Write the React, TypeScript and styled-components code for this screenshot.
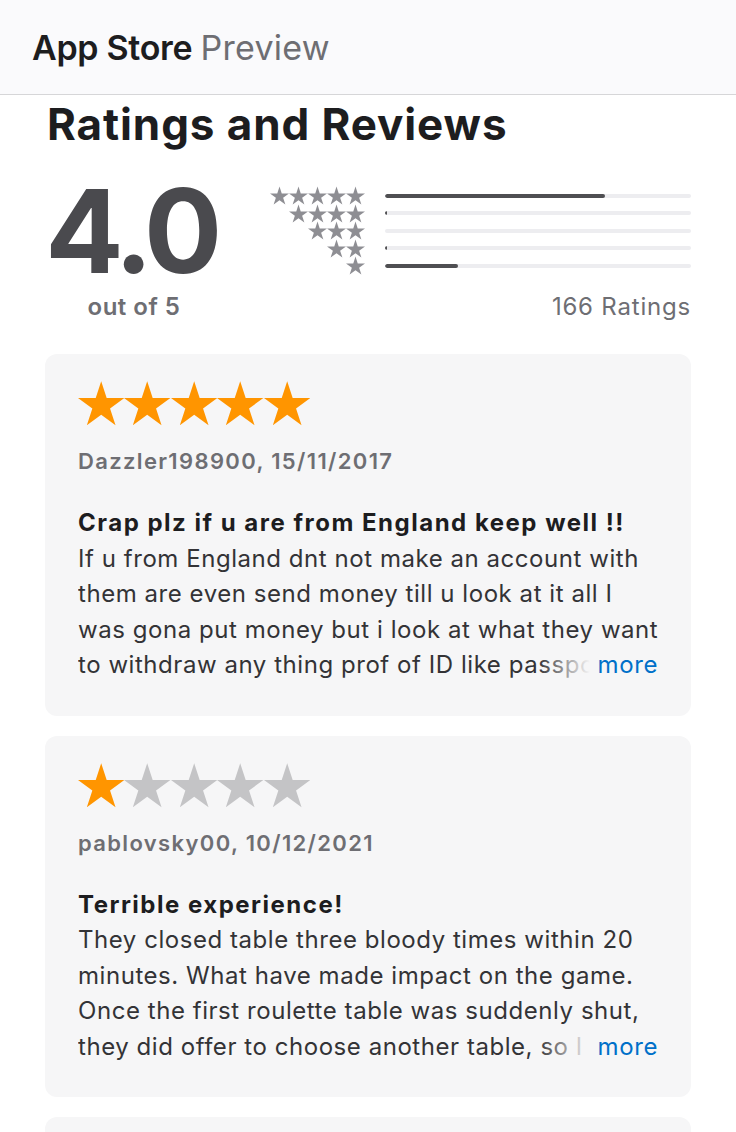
import styled, { createGlobalStyle } from "styled-components";

const GlobalStyle = createGlobalStyle`
  body {
    margin: 0;
    background: #fff;
    font-family: Inter, "Liberation Sans", sans-serif;
    color: #1d1d1f;
  }
`;

const Header = styled.header`
  height: 94px;
  background: #fafafc;
  border-bottom: 1px solid #d6d6d8;
  display: flex;
  align-items: center;
  padding: 0 32px;
  font-size: 34px;
`;

const Brand = styled.span`
  font-weight: 600;
  letter-spacing: -0.3px;
  color: #1d1d1f;
`;

const Sub = styled.span`
  font-weight: 400;
  letter-spacing: 0.3px;
  color: #6e6e73;
  margin-left: 8px;
`;

const Main = styled.main`
  padding: 0 45px;
`;

const Title = styled.h2`
  margin: 3px 0 0;
  padding-left: 2px;
  font-size: 44px;
  font-weight: 700;
  letter-spacing: 0.9px;
  line-height: 52px;
`;

const Summary = styled.section`
  display: flex;
  align-items: flex-start;
  margin-top: 31px;
`;

const Score = styled.div`
  display: flex;
  flex-direction: column;
  align-items: center;
  width: 178px;
`;

const Big = styled.div`
  font-size: 116px;
  font-weight: 700;
  line-height: 100px;
  letter-spacing: -5.5px;
  margin-right: 6px;
  color: #4a4a4e;
`;

const OutOf = styled.div`
  font-size: 24px;
  line-height: 30px;
  font-weight: 600;
  letter-spacing: 0.5px;
  color: #6e6e73;
  margin-top: 11px;
`;

const Histogram = styled.div`
  flex: 1;
  display: flex;
  flex-direction: column;
  padding-top: 6px;
  margin-left: 46px;
`;

const HistRow = styled.div`
  display: flex;
  align-items: center;
  height: 17.5px;
`;

const SmallStars = styled.div`
  width: 96px;
  display: flex;
  justify-content: flex-end;
  svg {
    display: block;
  }
`;

const Track = styled.div`
  flex: 1;
  height: 4px;
  margin-left: 20px;
  background: #ededf0;
  border-radius: 2px;
  overflow: hidden;
`;

const Fill = styled.div`
  height: 100%;
  background: #4f4f52;
  border-radius: 2px;
`;

const Count = styled.div`
  text-align: right;
  font-size: 24px;
  line-height: 30px;
  letter-spacing: 0.8px;
  color: #6e6e73;
  margin-top: 17px;
`;

const Card = styled.article`
  background: #f6f6f7;
  border-radius: 12px;
  padding: 26px 31px 33px 33px;
  margin-top: 32px;
  min-height: 40px;
  & + & {
    margin-top: 20px;
  }
`;

const Stars = styled.div`
  display: flex;
  height: 47px;
  align-items: center;
  svg {
    display: block;
  }
`;

const Author = styled.div`
  font-size: 22px;
  line-height: 30px;
  font-weight: 600;
  letter-spacing: 1.35px;
  color: #6e6e73;
  margin-top: 19px;
`;

const ReviewTitle = styled.h3`
  margin: 29px 0 0;
  font-size: 24px;
  font-weight: 700;
  letter-spacing: 1.5px;
  color: #1d1d1f;
  line-height: 35.5px;
`;

const BodyWrap = styled.div`
  position: relative;
  margin-right: 2px;
`;

const Body = styled.p`
  margin: 0 -2px 0 0;
  font-size: 24px;
  line-height: 35.5px;
  letter-spacing: 0.55px;
  color: #333336;
  height: 142px;
  overflow: hidden;
`;

const More = styled.span`
  position: absolute;
  right: 0;
  bottom: 0;
  line-height: 35.5px;
  font-size: 24px;
  letter-spacing: 0.6px;
  color: #0070c9;
  padding-left: 60px;
  background: linear-gradient(to right, rgba(246, 246, 247, 0) 0, #f6f6f7 52px);
`;

const Star = ({ size, color }: { size: number; color: string }) => (
  <svg width={size} height={size} viewBox="0 -0.6 24 24">
    <path
      fill={color}
      d="M12 0L14.83 8.72 24 8.72 16.58 14.11 19.42 22.83 12 17.44 4.58 22.83 7.42 14.11 0 8.72 9.17 8.72Z"
    />
  </svg>
);

const bars = [
  { stars: 5, value: 72 },
  { stars: 4, value: 0.6 },
  { stars: 3, value: 0 },
  { stars: 2, value: 0.6 },
  { stars: 1, value: 24 },
];

const reviews = [
  {
    rating: 5,
    author: "Dazzler198900, 15/11/2017",
    title: "Crap plz if u are from England keep well !!",
    body:
      "If u from England dnt not make an account with them are even send money till u look at it all I was gona put money but i look at what they want to withdraw any thing prof of ID like passport and more documents they ask for before you can take out",
  },
  {
    rating: 1,
    author: "pablovsky00, 10/12/2021",
    title: "Terrible experience!",
    body:
      "They closed table three bloody times within 20 minutes. What have made impact on the game. Once the first roulette table was suddenly shut, they did offer to choose another table, so I went there and it closed again",
  },
];

function ReviewCard({ review }: { review: (typeof reviews)[number] }) {
  return (
    <Card>
      <Stars>
        {[1, 2, 3, 4, 5].map((i) => (
          <Star key={i} size={46.4} color={i <= review.rating ? "#ff9500" : "#c4c4c6"} />
        ))}
      </Stars>
      <Author>{review.author}</Author>
      <ReviewTitle>{review.title}</ReviewTitle>
      <BodyWrap>
        <Body>{review.body}</Body>
        <More>more</More>
      </BodyWrap>
    </Card>
  );
}

export default function App() {
  return (
    <>
      <GlobalStyle />
      <Header>
        <Brand>App Store</Brand>
        <Sub>Preview</Sub>
      </Header>
      <Main>
        <Title>Ratings and Reviews</Title>
        <Summary>
          <Score>
            <Big>4.0</Big>
            <OutOf>out of 5</OutOf>
          </Score>
          <Histogram>
            {bars.map((b) => (
              <HistRow key={b.stars}>
                <SmallStars>
                  {Array.from({ length: b.stars }).map((_, i) => (
                    <Star key={i} size={19} color="#8e8e93" />
                  ))}
                </SmallStars>
                <Track>
                  <Fill style={{ width: `${b.value}%` }} />
                </Track>
              </HistRow>
            ))}
            <Count>166 Ratings</Count>
          </Histogram>
        </Summary>
        {reviews.map((r) => (
          <ReviewCard key={r.author} review={r} />
        ))}
        <Card />
      </Main>
    </>
  );
}
